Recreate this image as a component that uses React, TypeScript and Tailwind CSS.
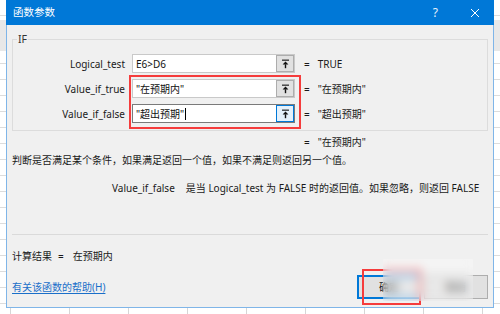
const font = "font-['Segoe_UI','Noto_Sans','Noto_Sans_CJK_SC',sans-serif]";

// Little "pick range" glyph shown at the right end of each argument box
function PickIcon() {
  return (
    <svg width="9" height="10" viewBox="0 0 9 10" className="block">
      <rect x="1" y="0.6" width="7" height="1.1" fill="#111" />
      <polygon points="4.5,2.5 1.6,5.5 7.4,5.5" fill="#111" />
      <rect x="3.8" y="5.3" width="1.4" height="3.9" fill="#111" />
    </svg>
  );
}

function ArgRow({ label, value, result, focused }: { label: string; value: string; result: string; focused?: boolean }) {
  return (
    <div className="flex items-center h-[19px]">
      <div className="w-[108px] text-right text-[10px] text-[#1a1a1a] leading-none">{label}</div>
      <div
        className={`ml-[7px] w-[163px] h-[19px] bg-white border flex items-center ${
          focused ? "border-[#7a7a7a]" : "border-[#c9c9c9]"
        }`}
      >
        <div className="flex-1 pl-[3px] text-[10px] text-[#111] leading-none whitespace-nowrap flex items-center">
          {value}
          {focused && <span className="inline-block w-px h-[12px] bg-black ml-px" />}
        </div>
        <div
          className={`w-[18px] h-full flex items-center justify-center border ${
            focused ? "border-[#0078d7] bg-[#e5f1fb]" : "border-[#adadad] bg-[#e1e1e1]"
          }`}
        >
          <PickIcon />
        </div>
      </div>
      <div className="ml-[9px] text-[10px] text-[#1a1a1a] leading-none">=</div>
      <div className="ml-[8px] text-[10px] text-[#1a1a1a] leading-none whitespace-nowrap">{result}</div>
    </div>
  );
}

export default function App() {
  return (
    <div
      className={`relative w-[500px] h-[314px] overflow-hidden bg-white bg-[linear-gradient(to_bottom,transparent_20px,#e8e8e8_20px,#e8e8e8_51px,transparent_51px),repeating-linear-gradient(to_bottom,transparent_0,transparent_15px,#dcdcdc_15px,#dcdcdc_16px),repeating-linear-gradient(to_right,transparent_0,transparent_10px,#d6d6d6_10px,#d6d6d6_11px,transparent_11px,transparent_59px)] ${font}`}
    >
      <div className="ml-[6px] w-[488px] h-[308px] flex flex-col">
        {/* title bar */}
        <div className="h-[25px] bg-[#0078d7] flex items-center text-white">
          <div className="pl-[7px] text-[10.5px] leading-none">函数参数</div>
          <div className="ml-auto text-[12px] leading-none mr-[32px] text-[#e8f1fb]">?</div>
          <svg width="10" height="10" viewBox="0 0 10 10" className="mr-[14px]">
            <path d="M1 1 L9 9 M9 1 L1 9" stroke="#fff" strokeWidth="1" />
          </svg>
        </div>

        {/* body */}
        <div className="flex-1 bg-[#f0f0f0] border-x border-b border-[#7fb5e8] px-[5px] flex flex-col text-[#1a1a1a]">
          <fieldset className="mt-[7px] border border-[#dcdcdc] pl-[4px] pb-[7px]">
            <legend className="px-[1px] text-[10.5px] leading-[14px] text-[#333]">IF</legend>
            <div className="mt-[8px] flex flex-col gap-[6px]">
              <ArgRow label="Logical_test" value="E6>D6" result="TRUE" />
              <ArgRow label="Value_if_true" value={'"在预期内"'} result={'"在预期内"'} />
              <ArgRow label="Value_if_false" value={'"超出预期"'} result={'"超出预期"'} focused />
            </div>
          </fieldset>

          <div className="mt-[4px] ml-[292px] h-[14px] flex items-center text-[10px] leading-none">
            <span>=</span>
            <span className="ml-[8px]">"在预期内"</span>
          </div>

          <div className="mt-[4px] h-[14px] flex items-center text-[10px] leading-none whitespace-nowrap">
            判断是否满足某个条件，如果满足返回一个值，如果不满足则返回另一个值。
          </div>

          <div className="mt-[14px] ml-[100px] h-[14px] flex items-center text-[10px] leading-none whitespace-nowrap">
            <span>Value_if_false</span>
            <span className="ml-[11px]">是当 Logical_test 为 FALSE 时的返回值。如果忽略，则返回 FALSE</span>
          </div>

          <div className="mt-[39px] h-px bg-[#dadada]" />

          <div className="mt-[14px] h-[14px] flex items-center text-[10px] leading-none whitespace-nowrap">
            <span>计算结果</span>
            <span className="ml-[6px]">=</span>
            <span className="ml-[9px]">在预期内</span>
          </div>

          <div className="mt-[12px] h-[24px] flex items-center">
            <a className="text-[10px] leading-none text-[#1a6fc9] underline underline-offset-2 whitespace-nowrap">
              有关该函数的帮助(H)
            </a>
            <div className="ml-auto flex gap-[3px]">
              <button className="w-[64px] h-[24px] border-2 border-[#0078d7] bg-[#e1e1e1] text-[10px] leading-none text-[#111]">
                确定
              </button>
              <button className="w-[64px] h-[24px] border border-[#adadad] bg-[#e1e1e1] text-[10px] leading-none text-[#111]">
                取消
              </button>
            </div>
          </div>
        </div>
      </div>

      {/* annotation boxes and blurred patch laid over the dialog */}
      <div className="absolute left-[129px] top-[75px] w-[172px] h-[54px] border-2 border-[#f53c3c]" />
      <div className="absolute left-[362px] top-[269px] w-[59px] h-[36px] border-2 border-[#f53c3c]" />
      <div className="absolute left-[383px] top-[259px] w-[90px] h-[42px] backdrop-blur-[5px] bg-white/25" />
    </div>
  );
}
